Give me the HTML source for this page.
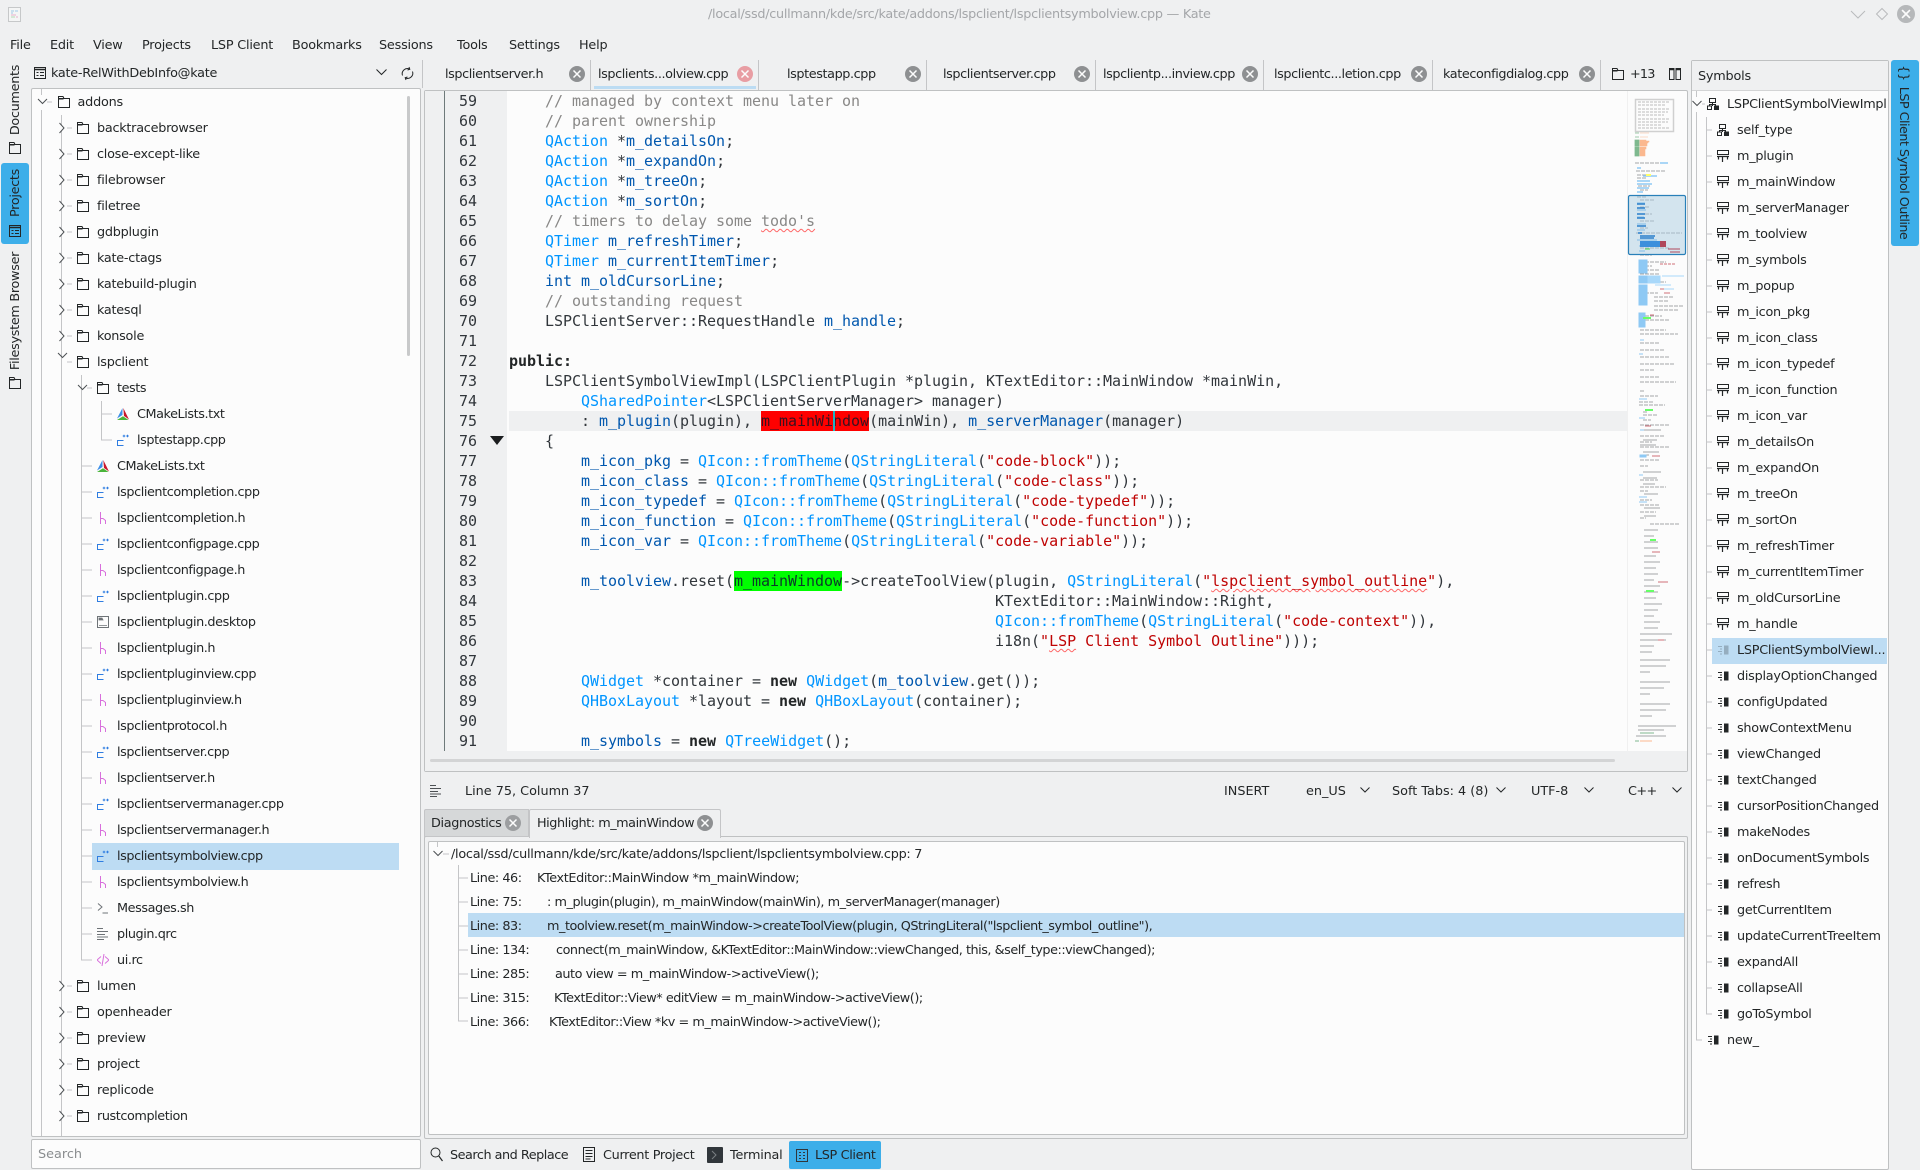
<!DOCTYPE html>
<html><head><meta charset="utf-8"><title>Kate</title>
<style>
html,body{margin:0;padding:0;width:1920px;height:1170px;overflow:hidden;background:#eff0f1;color:#232627;font:12.8px/26px "DejaVu Sans",sans-serif}
.a{position:absolute;white-space:nowrap}
.box{position:absolute;box-sizing:border-box;background:#fcfcfc;border:1px solid #bfc1c2;border-radius:2px}
svg{position:absolute;overflow:visible}
.rot{position:absolute;white-space:nowrap;letter-spacing:-.3px;transform:translate(-50%,-50%) rotate(-90deg)}
.tree{position:absolute;left:0;overflow:hidden}
.r{position:relative;height:26px;line-height:28px;white-space:nowrap}
.r svg{top:7px;width:12px;height:12px}
.t0{padding-left:77.5px;letter-spacing:-.2px}.t0 svg{left:57.5px}
.t1{padding-left:97px;letter-spacing:-.25px}.t1 svg{left:77px}
.t2{padding-left:117px;letter-spacing:-.42px}.t2 svg{left:97px}
.t3{padding-left:137px;letter-spacing:-.42px}.t3 svg{left:117px}
.s0{padding-left:1727px;letter-spacing:-.28px}.s0 svg{left:1707px}
.s1{padding-left:1737px;letter-spacing:-.25px}.s1 svg{left:1717px}
.code{position:absolute;font:15px/20px "DejaVu Sans Mono",monospace;letter-spacing:-.03px;white-space:pre;color:#31363b}
.code i{font-style:normal;color:#898887}
.code u{text-decoration:none;color:#0095ff}
.code em{font-style:normal;color:#0057ae}
.code s{text-decoration:none;color:#bf0303}
.code b{font-weight:bold;color:#232627}
.w{text-decoration:underline wavy #f66 .8px;text-underline-offset:2px}
.sq{position:absolute;width:16px;height:16px}
.res{position:absolute;line-height:24px;white-space:nowrap;margin-top:1px;letter-spacing:-.45px}
.mn{letter-spacing:-.2px}
.tb{letter-spacing:-.4px;top:62px}
</style></head><body>
<svg width="0" height="0" style="position:absolute">
<symbol id="f" viewBox="0 0 12 12"><path d="M.5 11.5V.5h4.500l1 2h5.500v9zM.5 3h5" fill="none" stroke="#232627"/><path d="M.5 2.500h11" stroke="#232627"/></symbol>
<symbol id="cp" viewBox="0 0 12 12"><path d="M6.500 6.500H.5v5h6" fill="none" stroke="#2f7de1"/><path d="M5.700 2h2.600M7 .7v2.600M9.200 2h2.600M10.500 .7v2.600" fill="none" stroke="#2f7de1"/></symbol>
<symbol id="h" viewBox="0 0 12 12"><path d="M3.500 0v12M3.500 6.500h2.500l2.500 2v3.500" fill="none" stroke="#d86fdc"/></symbol>
<symbol id="cm" viewBox="0 0 12 12"><path d="M5.500 0L0 10.500 5.500 7z" fill="#3d8fe8"/><path d="M6.300 0L12 11.500 7 8z" fill="#c8172c"/><path d="M0 12L6 8.300 11.500 12z" fill="#4ab43a"/></symbol>
<symbol id="dk" viewBox="0 0 12 12"><path d="M.5.500h11v11H.5z" fill="none" stroke="#6e7377"/><path d="M2 2h3l1 2H2zM2 9.500h8" fill="#6e7377" stroke="#6e7377" stroke-width=".8"/></symbol>
<symbol id="sh" viewBox="0 0 12 12"><path d="M1 1.500L5 5 1 8.500M5.500 11h5.500" fill="none" stroke="#6e7377"/></symbol>
<symbol id="qr" viewBox="0 0 12 12"><path d="M0 .5h6M0 3.500h11M0 6.500h8M0 9h11M0 11.500h7" fill="none" stroke="#6e7377"/></symbol>
<symbol id="ui" viewBox="0 0 12 12"><path d="M4 2.500L0 6l4 3.500M8 2.500L12 6l-4 3.500M7 0L5 12" fill="none" stroke="#d86fdc"/></symbol>
<symbol id="cl" viewBox="0 0 12 12"><path d="M2.500.5h6v4h-6zM.5 8h4v3.500h-4zM5.500 4.500V8M2.500 8V6.500h6V8" fill="none" stroke="#232627"/><path d="M7 7.500h5v4.500H7z" fill="#232627"/></symbol>
<symbol id="v" viewBox="0 0 12 12"><path d="M.5.500h11v4H.5z" fill="none" stroke="#232627"/><path d="M0 6.500h12M1.500 7v2.500M5.500 7v5M10.500 7v2.500" fill="none" stroke="#232627" stroke-width="1.200"/></symbol>
<symbol id="fn" viewBox="0 0 12 12"><path d="M1 2.500h4M3 5h2M1 7.500h4M3 10h2" fill="none" stroke="#232627"/><path d="M7 1.500h4.500v9H7z" fill="#232627"/></symbol>
<symbol id="pj" viewBox="0 0 12 12"><path d="M.5.500h11v11H.5z" fill="none" stroke="#232627"/><path d="M.5 2.500h11" stroke="#232627" stroke-width="1.500"/><path d="M2.500 5.500h2M6 5.500h4M2.500 8.500h2M6 8.500h4" fill="none" stroke="#232627"/></symbol>
<symbol id="x" viewBox="0 0 16 16"><circle cx="8" cy="8" r="8" fill="currentColor"/><path d="M4.500 4.500l7 7M11.500 4.500l-7 7" stroke="#fcfcfc" stroke-width="1.500"/></symbol>
</svg>

<!-- title bar -->
<svg style="left:8px;top:7px" width="13" height="15" viewBox="0 0 13 15"><path d="M.5.500h12v14H.5z" fill="#f4f5f5" stroke="#c6c8c9"/><path d="M3 4h3M7 4h3M3 6h2" stroke="#9fc9e6"/><path d="M3 8h5M8 10h2" stroke="#e7aecb"/><path d="M3 10h4" stroke="#b3d9b3"/></svg>
<div class="a" style="left:708px;top:2px;color:#a4a6a9;letter-spacing:-.27px">/local/ssd/cullmann/kde/src/kate/addons/lspclient/lspclientsymbolview.cpp — Kate</div>
<svg style="left:1850px;top:9px" width="16" height="10"><path d="M1 2l7 7 7-7" fill="none" stroke="#b9bbbd"/></svg>
<svg style="left:1876px;top:8px" width="12" height="12"><path d="M6 .5L11.500 6 6 11.500.5 6z" fill="none" stroke="#b9bbbd"/></svg>
<svg class="sq" style="left:1897px;top:5px;width:18px;height:18px;color:#b6b8ba"><use href="#x"/></svg>

<!-- menu -->
<div class="a mn" style="left:10px;top:33px">File</div>
<div class="a mn" style="left:50px;top:33px">Edit</div>
<div class="a mn" style="left:93px;top:33px">View</div>
<div class="a mn" style="left:142px;top:33px">Projects</div>
<div class="a mn" style="left:211px;top:33px">LSP Client</div>
<div class="a mn" style="left:292px;top:33px">Bookmarks</div>
<div class="a mn" style="left:379px;top:33px">Sessions</div>
<div class="a mn" style="left:457px;top:33px">Tools</div>
<div class="a mn" style="left:509px;top:33px">Settings</div>
<div class="a mn" style="left:579px;top:33px">Help</div>

<!-- left sidebar -->
<div class="a" style="left:1px;top:163px;width:28px;height:81px;background:#3daee9;border-radius:3px"></div>
<div class="rot" style="left:16px;top:100px">Documents</div>
<div class="rot" style="left:16px;top:193px">Projects</div>
<div class="rot" style="left:16px;top:311px">Filesystem Browser</div>
<svg style="left:9px;top:142px;width:12px;height:12px"><use href="#f"/></svg>
<svg style="left:9px;top:225px;width:12px;height:12px"><use href="#pj"/></svg>
<svg style="left:9px;top:377px;width:12px;height:12px"><use href="#f"/></svg>

<!-- project header -->
<svg style="left:34px;top:67px;width:12px;height:12px"><use href="#pj"/></svg>
<div class="a" style="left:51px;top:61px;letter-spacing:-.25px">kate-RelWithDebInfo@kate</div>
<svg style="left:376px;top:69px" width="11" height="7"><path d="M.5.500l5 5 5-5" fill="none" stroke="#232627"/></svg>
<svg style="left:401px;top:67px" width="13" height="13"><path d="M1.500 8.500a5.200 5.200 0 0 1 7-6.500M11.500 4.500a5.200 5.200 0 0 1-7 6.500M8 0l.8 2.300-2.300.7M5 13l-.8-2.300 2.300-.7" fill="none" stroke="#232627"/></svg>

<!-- left tree -->
<div class="box" style="left:31px;top:88px;width:390px;height:1049px"></div>
<div class="a" style="left:92px;top:843px;width:307px;height:27px;background:#bddcf3"></div>
<svg style="left:0;top:0" width="430" height="1140"><path d="M41.500 89v6M41.500 110V1136M47 102h5M61.500 115V1136M67 128h5M67 154h5M67 180h5M67 206h5M67 232h5M67 258h5M67 284h5M67 310h5M67 336h5M67 362h5M67 986h5M67 1012h5M67 1038h5M67 1064h5M67 1090h5M67 1116h5M81.500 375V960H92M87 388h5M82 466h10M82 492h10M82 518h10M82 544h10M82 570h10M82 596h10M82 622h10M82 648h10M82 674h10M82 700h10M82 726h10M82 752h10M82 778h10M82 804h10M82 830h10M82 856h10M82 882h10M82 908h10M82 934h10M101.500 401V440H112M102 414h10" fill="none" stroke="#c4c5c7"/>
<path d="M38 99l4.500 4.500L47 99M58 353l4.500 4.500L67 353M78 385l4.500 4.500L87 385" fill="none" stroke="#4d5154"/>
<path d="M59.500 123l4.500 5-4.500 5M59.500 149l4.500 5-4.500 5M59.500 175l4.500 5-4.500 5M59.500 201l4.500 5-4.500 5M59.500 227l4.500 5-4.500 5M59.500 253l4.500 5-4.500 5M59.500 279l4.500 5-4.500 5M59.500 305l4.500 5-4.500 5M59.500 331l4.500 5-4.500 5M59.500 981l4.500 5-4.500 5M59.500 1007l4.500 5-4.500 5M59.500 1033l4.500 5-4.500 5M59.500 1059l4.500 5-4.500 5M59.500 1085l4.500 5-4.500 5M59.500 1111l4.500 5-4.500 5" fill="#fcfcfc" stroke="#4d5154"/></svg>
<div class="tree" style="top:89px;width:420px;height:1047px">
<div class="r t0"><svg><use href="#f"/></svg>addons</div>
<div class="r t1"><svg><use href="#f"/></svg>backtracebrowser</div>
<div class="r t1"><svg><use href="#f"/></svg>close-except-like</div>
<div class="r t1"><svg><use href="#f"/></svg>filebrowser</div>
<div class="r t1"><svg><use href="#f"/></svg>filetree</div>
<div class="r t1"><svg><use href="#f"/></svg>gdbplugin</div>
<div class="r t1"><svg><use href="#f"/></svg>kate-ctags</div>
<div class="r t1"><svg><use href="#f"/></svg>katebuild-plugin</div>
<div class="r t1"><svg><use href="#f"/></svg>katesql</div>
<div class="r t1"><svg><use href="#f"/></svg>konsole</div>
<div class="r t1"><svg><use href="#f"/></svg>lspclient</div>
<div class="r t2"><svg><use href="#f"/></svg>tests</div>
<div class="r t3"><svg><use href="#cm"/></svg>CMakeLists.txt</div>
<div class="r t3"><svg><use href="#cp"/></svg>lsptestapp.cpp</div>
<div class="r t2"><svg><use href="#cm"/></svg>CMakeLists.txt</div>
<div class="r t2"><svg><use href="#cp"/></svg>lspclientcompletion.cpp</div>
<div class="r t2"><svg><use href="#h"/></svg>lspclientcompletion.h</div>
<div class="r t2"><svg><use href="#cp"/></svg>lspclientconfigpage.cpp</div>
<div class="r t2"><svg><use href="#h"/></svg>lspclientconfigpage.h</div>
<div class="r t2"><svg><use href="#cp"/></svg>lspclientplugin.cpp</div>
<div class="r t2"><svg><use href="#dk"/></svg>lspclientplugin.desktop</div>
<div class="r t2"><svg><use href="#h"/></svg>lspclientplugin.h</div>
<div class="r t2"><svg><use href="#cp"/></svg>lspclientpluginview.cpp</div>
<div class="r t2"><svg><use href="#h"/></svg>lspclientpluginview.h</div>
<div class="r t2"><svg><use href="#h"/></svg>lspclientprotocol.h</div>
<div class="r t2"><svg><use href="#cp"/></svg>lspclientserver.cpp</div>
<div class="r t2"><svg><use href="#h"/></svg>lspclientserver.h</div>
<div class="r t2"><svg><use href="#cp"/></svg>lspclientservermanager.cpp</div>
<div class="r t2"><svg><use href="#h"/></svg>lspclientservermanager.h</div>
<div class="r t2"><svg><use href="#cp"/></svg>lspclientsymbolview.cpp</div>
<div class="r t2"><svg><use href="#h"/></svg>lspclientsymbolview.h</div>
<div class="r t2"><svg><use href="#sh"/></svg>Messages.sh</div>
<div class="r t2"><svg><use href="#qr"/></svg>plugin.qrc</div>
<div class="r t2"><svg><use href="#ui"/></svg>ui.rc</div>
<div class="r t1"><svg><use href="#f"/></svg>lumen</div>
<div class="r t1"><svg><use href="#f"/></svg>openheader</div>
<div class="r t1"><svg><use href="#f"/></svg>preview</div>
<div class="r t1"><svg><use href="#f"/></svg>project</div>
<div class="r t1"><svg><use href="#f"/></svg>replicode</div>
<div class="r t1" style="letter-spacing:-.42px"><svg><use href="#f"/></svg>rustcompletion</div>
</div>
<div class="a" style="left:407px;top:96px;width:3px;height:260px;background:#c8c9ca;border-radius:2px"></div>

<!-- search -->
<div class="box" style="left:31px;top:1139px;width:390px;height:30px;line-height:30px;padding-left:6px;color:#8a8d8f">Search</div>

<!-- tabs -->
<div class="a" style="left:422px;top:60px;width:1px;height:28px;background:#c4c5c7"></div>
<div class="a" style="left:590px;top:60px;width:1px;height:30px;background:#c4c5c7"></div>
<div class="a" style="left:758px;top:60px;width:1px;height:30px;background:#c4c5c7"></div>
<div class="a" style="left:926px;top:60px;width:1px;height:30px;background:#c4c5c7"></div>
<div class="a" style="left:1095px;top:60px;width:1px;height:30px;background:#c4c5c7"></div>
<div class="a" style="left:1263px;top:60px;width:1px;height:30px;background:#c4c5c7"></div>
<div class="a" style="left:1432px;top:60px;width:1px;height:30px;background:#c4c5c7"></div>
<div class="a" style="left:1600px;top:60px;width:1px;height:30px;background:#c4c5c7"></div>
<div class="a" style="left:594px;top:86px;width:162px;height:3px;background:#bcdcf3"></div>
<div class="a tb" style="left:445px">lspclientserver.h</div>
<div class="a tb" style="left:598px">lspclients...olview.cpp</div>
<div class="a tb" style="left:787px">lsptestapp.cpp</div>
<div class="a tb" style="left:943px">lspclientserver.cpp</div>
<div class="a tb" style="left:1103px">lspclientp...inview.cpp</div>
<div class="a tb" style="left:1274px">lspclientc...letion.cpp</div>
<div class="a tb" style="left:1443px">kateconfigdialog.cpp</div>
<svg class="sq" style="left:569px;top:66px;color:#8e9092"><use href="#x"/></svg>
<svg class="sq" style="left:737px;top:66px;color:#e89da3"><use href="#x"/></svg>
<svg class="sq" style="left:905px;top:66px;color:#8e9092"><use href="#x"/></svg>
<svg class="sq" style="left:1074px;top:66px;color:#8e9092"><use href="#x"/></svg>
<svg class="sq" style="left:1242px;top:66px;color:#8e9092"><use href="#x"/></svg>
<svg class="sq" style="left:1411px;top:66px;color:#8e9092"><use href="#x"/></svg>
<svg class="sq" style="left:1579px;top:66px;color:#8e9092"><use href="#x"/></svg>
<svg style="left:1612px;top:68px;width:12px;height:12px"><use href="#f"/></svg>
<div class="a" style="left:1630px;top:62px;letter-spacing:-.8px">+13</div>
<svg style="left:1669px;top:68px" width="12" height="12"><path d="M.5.500h4.500v11H.5zM7 .5h4.500v11H7z" fill="none" stroke="#232627"/><path d="M.5 1.500h4.500M7 1.500h4.500" stroke="#232627" stroke-width="1.500"/></svg>

<!-- editor -->
<div class="box" style="left:424px;top:90px;width:1264px;height:682px"></div>
<div class="a" style="left:425px;top:91px;width:82px;height:660px;background:#eff0f1"></div>
<div class="a" style="left:444px;top:91px;width:1px;height:660px;background:#6e7a7a"></div>
<div class="a" style="left:425px;top:751px;width:1262px;height:20px;background:#eff0f1"></div>
<div class="a" style="left:430px;top:759px;width:1185px;height:3px;background:#d3d4d5;border-radius:2px"></div>
<div class="a" style="left:509px;top:411px;width:1118px;height:20px;background:#eff0f1"></div>
<div class="a" style="left:761px;top:411px;width:108px;height:20px;background:#f00"></div>
<div class="a" style="left:734px;top:571px;width:108px;height:20px;background:#0f0"></div>
<div class="a" style="left:833px;top:411px;width:2px;height:20px;background:#1fb5c4;z-index:3"></div>
<div class="code" style="left:459px;top:91px;height:660px;overflow:hidden;color:#31363b">59
60
61
62
63
64
65
66
67
68
69
70
71
72
73
74
75
76
77
78
79
80
81
82
83
84
85
86
87
88
89
90
91</div>
<svg style="left:490px;top:436px" width="14" height="9"><path d="M0 0h14L7 9z" fill="#1b1d1f"/></svg>
<div class="code" style="left:509px;top:91px;width:1118px;height:660px;overflow:hidden">    <i>// managed by context menu later on</i>
    <i>// parent ownership</i>
    <u>QAction</u> *<em>m_detailsOn</em>;
    <u>QAction</u> *<em>m_expandOn</em>;
    <u>QAction</u> *<em>m_treeOn</em>;
    <u>QAction</u> *<em>m_sortOn</em>;
    <i>// timers to delay some <span class="w">todo's</span></i>
    <u>QTimer</u> <em>m_refreshTimer</em>;
    <u>QTimer</u> <em>m_currentItemTimer</em>;
    <em>int m_oldCursorLine</em>;
    <i>// outstanding request</i>
    LSPClientServer::RequestHandle <em>m_handle</em>;

<b>public:</b>
    LSPClientSymbolViewImpl(LSPClientPlugin *plugin, KTextEditor::MainWindow *mainWin,
        <u>QSharedPointer</u>&lt;LSPClientServerManager&gt; manager)
        : <em>m_plugin</em>(plugin), <span style="color:#3a1220">m_mainWindow</span>(mainWin), <em>m_serverManager</em>(manager)
    {
        <em>m_icon_pkg</em> = <u>QIcon::fromTheme</u>(<u>QStringLiteral</u>(<s>"code-block"</s>));
        <em>m_icon_class</em> = <u>QIcon::fromTheme</u>(<u>QStringLiteral</u>(<s>"code-class"</s>));
        <em>m_icon_typedef</em> = <u>QIcon::fromTheme</u>(<u>QStringLiteral</u>(<s>"code-typedef"</s>));
        <em>m_icon_function</em> = <u>QIcon::fromTheme</u>(<u>QStringLiteral</u>(<s>"code-function"</s>));
        <em>m_icon_var</em> = <u>QIcon::fromTheme</u>(<u>QStringLiteral</u>(<s>"code-variable"</s>));

        <em>m_toolview</em>.reset(<span style="color:#0b3a2a">m_mainWindow</span>-&gt;createToolView(plugin, <u>QStringLiteral</u>(<s>"<span class="w">lspclient_symbol_outline</span>"</s>),
                                                      KTextEditor::MainWindow::Right,
                                                      <u>QIcon::fromTheme</u>(<u>QStringLiteral</u>(<s>"code-context"</s>)),
                                                      i18n(<s>"<span class="w">LSP</span> Client Symbol Outline"</s>)));

        <u>QWidget</u> *container = <b>new</b> <u>QWidget</u>(<em>m_toolview</em>.get());
        <u>QHBoxLayout</u> *layout = <b>new</b> <u>QHBoxLayout</u>(container);

        <em>m_symbols</em> = <b>new</b> <u>QTreeWidget</u>();</div>

<!-- minimap -->
<svg style="left:1627px;top:91px" width="60" height="660" viewBox="1627 91 60 660">
<path d="M1627.500 91V751" stroke="#f0f0f0"/>
<path d="M1635.500 99.500h38v32h-38z" fill="none" stroke="#d0d0d0" stroke-width="1.500"/>
<path d="M1638 102h32M1638 105h28M1638 109h32M1638 112h30M1638 115h26M1638 119h31M1638 122h30M1638 125h24M1638 128h32" stroke="#bdbdbd" fill="none" stroke-dasharray="3 1"/>
<path d="M1635 133h4M1635 137h4M1635 140h4v6h-4zM1635 147h4v9h-4z" stroke="#7fb98f" fill="#7fb98f" stroke-width=".8"/>
<path d="M1640 133h9M1640 137h8M1640 140h6v1h3v1h-1v1h-1v3h-7zM1640 147h6v2h-1v7h-5z" stroke="#fbb88f" fill="#fbb88f" stroke-width=".6"/>
<g fill="none" stroke-width="1">
<path d="M1635 163h30M1636 171h30M1637 175h12M1637 178h10M1638 186h12M1640 190h8M1637 197h10M1640 200h14M1640 207h10M1640 214h12M1640 221h14M1640 228h8M1636 233h46M1640 248h30M1640 255h12M1640 262h26M1640 266h12M1640 270h20M1640 274h20M1640 278h14M1640 282h26M1640 293h18M1654 297h20M1654 301h14M1654 306h30M1654 310h24M1640 316h22M1640 320h30M1640 330h26M1640 334h38M1640 343h20M1640 350h24M1640 357h30M1640 364h34M1640 370h14M1640 377h20M1640 382h36M1640 391h4M1640 396h18M1639 402h14M1639 405h26M1643 412h4M1643 415h14M1643 420h8M1640 425h30M1640 430h20M1640 436h24M1640 442h12M1640 447h30M1640 455h10M1640 460h20M1640 466h8M1640 480h18M1640 487h26M1640 491h8M1640 500h12M1640 505h20M1640 512h16M1640 518h6M1650 524h30M1642 430h20" stroke="#a4a6a8" stroke-dasharray="4 1"/>
<path d="M1640 445h16M1643 440h14M1643 452h16M1643 472h18M1643 478h14M1643 484h12M1644 494h14M1644 508h16M1644 516h12M1644 530h14M1644 536h10M1644 542h14M1644 548h14M1644 556h12M1644 562h16M1644 568h12M1644 574h14M1644 580h10M1644 586h16M1644 592h14M1644 598h12M1644 604h18M1644 610h14M1644 616h10M1644 622h16M1644 628h14M1640 634h32M1640 640h26M1640 646h14M1640 652h12M1640 660h30M1640 666h26M1640 672h10M1640 682h30M1640 688h24M1640 694h10M1640 704h30M1640 710h26M1640 716h12M1638 726h38M1638 730h26M1636 736h30" stroke="#a4a6a8"/>
<path d="M1637 168h4M1637 181h13M1637 184h15M1637 188h12M1637 192h6M1643 176h14M1660 163h8M1637 203h8M1637 210h9M1637 217h7M1637 224h9M1637 230h8M1637 240h20M1639 246h4M1639 251h6" stroke="#8ec9f4" stroke-width="1.500"/>
<path d="M1639 260h8v13h-8zM1639 276h8v7h-8zM1639 285h8v20h-8zM1639 313h6v14h-6zM1640 455h6v2h-6zM1640 340h4M1640 430h4M1639 354h4M1639 399h8M1639 418h6M1639 475h4M1639 497h8M1639 502h8" stroke="#8ec9f4" fill="#8ec9f4"/>
<path d="M1648 276h12v7h-12zM1662 276h22M1655 285h16M1660 289h14" stroke="#a8d8fa" fill="#a8d8fa"/>
<path d="M1660 264h3M1664 264h3M1668 264h3M1672 264h3M1660 289h4M1664 293h6M1650 315h4M1645 426h6M1658 582h10M1652 456h8M1658 640h6M1652 552h8" stroke="#cf6f77"/>
<path d="M1646 175h5" stroke="#ffff66" stroke-width="2"/><path d="M1643 318h8M1645 410h8M1646 591h8M1650 540h6" stroke="#66ff66" stroke-width="2"/>
<path d="M1640 733h4M1644 733h10M1635 741h4" stroke="#7fb98f"/><path d="M1640 741h12" stroke="#fbb88f"/>
</g>
<rect x="1628.500" y="195.500" width="57" height="59" rx="1.500" fill="#a9cbe0" fill-opacity=".5" stroke="#2980b9" stroke-width="1.200"/>
<path d="M1637 204h8M1637 208h8M1637 214h8M1637 218h8M1637 226h9M1638 233h4M1640 236h15M1640 238h14" stroke="#2a7fcb" stroke-width="1.500" fill="none"/>
<path d="M1640 241h12v6h-12zM1652 241h8v6h-8z" fill="#3c8fdc"/><path d="M1660 241h6v6h-6z" fill="#b0485c"/><path d="M1645 249h5" stroke="#4dd84d"/><path d="M1668 249h12M1670 252h10" stroke="#b0485c"/>
</svg>

<!-- status bar -->
<svg style="left:430px;top:785px" width="13" height="12"><path d="M0 .5h6M0 3.500h11M0 6.500h8M0 9h11M0 11.500h7" fill="none" stroke="#4d5154"/></svg>
<div class="a" style="left:465px;top:779px">Line 75, Column 37</div>
<div class="a" style="left:1224px;top:779px">INSERT</div>
<div class="a" style="left:1306px;top:779px">en_US</div>
<div class="a" style="left:1392px;top:779px">Soft Tabs: 4 (8)</div>
<div class="a" style="left:1531px;top:779px">UTF-8</div>
<div class="a" style="left:1628px;top:779px;letter-spacing:-.6px">C++</div>
<svg style="left:1360px;top:787px" width="10" height="6"><path d="M.5.500l4.500 4.500 4.500-4.500" fill="none" stroke="#232627"/></svg>
<svg style="left:1496px;top:787px" width="10" height="6"><path d="M.5.500l4.500 4.500 4.500-4.500" fill="none" stroke="#232627"/></svg>
<svg style="left:1584px;top:787px" width="10" height="6"><path d="M.5.500l4.500 4.500 4.500-4.500" fill="none" stroke="#232627"/></svg>
<svg style="left:1672px;top:787px" width="10" height="6"><path d="M.5.500l4.500 4.500 4.500-4.500" fill="none" stroke="#232627"/></svg>

<!-- results -->
<div class="box" style="left:424px;top:836px;width:1264px;height:303px;background:#eff0f1"></div>
<div class="a" style="left:424px;top:809px;width:105px;height:28px;background:#d6d8d9;border:1px solid #c4c5c7;box-sizing:border-box;border-radius:2px 0 0 0"></div>
<div class="a" style="left:529px;top:809px;width:192px;height:29px;background:#eff0f1;border:1px solid #c4c5c7;border-bottom:none;box-sizing:border-box;border-radius:2px 2px 0 0"></div>
<div class="a" style="left:431px;top:811px;letter-spacing:-.35px">Diagnostics</div>
<svg class="sq" style="left:505px;top:815px;color:#9c9ea0"><use href="#x"/></svg>
<div class="a" style="left:537px;top:811px;letter-spacing:-.45px">Highlight: m_mainWindow</div>
<svg class="sq" style="left:697px;top:815px;color:#8e9092"><use href="#x"/></svg>
<div class="box" style="left:428px;top:841px;width:1257px;height:294px"></div>
<div class="a" style="left:468px;top:913px;width:1216px;height:24px;background:#bddcf3"></div>
<svg style="left:0;top:0" width="500" height="1040"><path d="M437.500 842v5M443 854h6M458.500 865V1021H468M459 878h9M459 902h9M459 926h9M459 950h9M459 974h9M459 998h9" fill="none" stroke="#c4c5c7"/><path d="M433.500 851l4.500 4.500 4.500-4.500" fill="none" stroke="#4d5154"/></svg>
<div class="res" style="left:451px;top:842px;letter-spacing:-.26px">/local/ssd/cullmann/kde/src/kate/addons/lspclient/lspclientsymbolview.cpp: 7</div>
<div class="res" style="left:470px;top:866px">Line: 46:</div><div class="res" style="left:537px;top:866px;letter-spacing:-.38px">KTextEditor::MainWindow *m_mainWindow;</div>
<div class="res" style="left:470px;top:890px">Line: 75:</div><div class="res" style="left:547px;top:890px">: m_plugin(plugin), m_mainWindow(mainWin), m_serverManager(manager)</div>
<div class="res" style="left:470px;top:914px">Line: 83:</div><div class="res" style="left:547px;top:914px">m_toolview.reset(m_mainWindow-&gt;createToolView(plugin, QStringLiteral("lspclient_symbol_outline"),</div>
<div class="res" style="left:470px;top:938px">Line: 134:</div><div class="res" style="left:556px;top:938px;letter-spacing:-.47px">connect(m_mainWindow, &amp;KTextEditor::MainWindow::viewChanged, this, &amp;self_type::viewChanged);</div>
<div class="res" style="left:470px;top:962px">Line: 285:</div><div class="res" style="left:555px;top:962px">auto view = m_mainWindow-&gt;activeView();</div>
<div class="res" style="left:470px;top:986px">Line: 315:</div><div class="res" style="left:554px;top:986px">KTextEditor::View* editView = m_mainWindow-&gt;activeView();</div>
<div class="res" style="left:470px;top:1010px">Line: 366:</div><div class="res" style="left:549px;top:1010px">KTextEditor::View *kv = m_mainWindow-&gt;activeView();</div>

<!-- bottom bar -->
<svg style="left:430px;top:1147px" width="14" height="15"><circle cx="5.500" cy="5.500" r="4.500" fill="none" stroke="#232627"/><path d="M8.800 9l3.700 5" stroke="#232627" stroke-width="1.200"/></svg>
<div class="a" style="left:450px;top:1143px;letter-spacing:-.48px">Search and Replace</div>
<svg style="left:583px;top:1147px" width="12" height="15"><path d="M.5.500h11v14H.5z" fill="none" stroke="#232627"/><path d="M2.500 3.500h7M2.500 6.500h7M2.500 9.500h7M2.500 12h5" stroke="#232627"/></svg>
<div class="a" style="left:603px;top:1143px;letter-spacing:-.3px">Current Project</div>
<svg style="left:707px;top:1147px" width="16" height="16"><rect width="16" height="16" rx="1" fill="#31363b"/><path d="M5 4l4 4-4 4" fill="none" stroke="#7b8084"/></svg>
<div class="a" style="left:730px;top:1143px;letter-spacing:-.2px">Terminal</div>
<div class="a" style="left:789px;top:1141px;width:92px;height:28px;background:#3daee9;border-radius:2px"></div>
<svg style="left:796px;top:1149px" width="12" height="13"><path d="M.5.500h11v12H.5z" fill="none" stroke="#31363b"/><path d="M3 3.500h2M7 3.500h2M3 6.500h2M7 6.500h2M3 9.500h2M7 9.500h2" stroke="#31363b"/></svg>
<div class="a" style="left:815px;top:1143px;letter-spacing:-.35px">LSP Client</div>

<!-- symbols -->
<div class="box" style="left:1691px;top:60px;width:198px;height:1110px"></div>
<div class="a" style="left:1692px;top:90px;width:196px;height:1px;background:#d3d4d5"></div>
<div class="a" style="left:1692px;top:61px;width:196px;height:29px;background:#eff0f1"></div>
<div class="a" style="left:1698px;top:64px;letter-spacing:-.2px">Symbols</div>
<div class="a" style="left:1712px;top:638px;width:175px;height:26px;background:#bddcf3"></div>
<svg style="left:0;top:0" width="1890" height="1060"><path d="M1696.500 91v6M1696.500 112V1040H1702M1702 104h3M1706.500 117V1014H1712" fill="none" stroke="#c4c5c7"/><path d="M1707 130h5M1707 156h5M1707 182h5M1707 208h5M1707 234h5M1707 260h5M1707 286h5M1707 312h5M1707 338h5M1707 364h5M1707 390h5M1707 416h5M1707 442h5M1707 468h5M1707 494h5M1707 520h5M1707 546h5M1707 572h5M1707 598h5M1707 624h5M1707 650h5M1707 676h5M1707 702h5M1707 728h5M1707 754h5M1707 780h5M1707 806h5M1707 832h5M1707 858h5M1707 884h5M1707 910h5M1707 936h5M1707 962h5M1707 988h5" stroke="#c4c5c7"/><path d="M1692.500 101l4.500 4.500 4.500-4.500" fill="none" stroke="#4d5154"/></svg>
<div class="tree" style="top:91px;width:1887px;height:1078px">
<div class="r s0"><svg><use href="#cl"/></svg>LSPClientSymbolViewImpl</div>
<div class="r s1"><svg><use href="#cl"/></svg>self_type</div>
<div class="r s1"><svg><use href="#v"/></svg>m_plugin</div>
<div class="r s1"><svg><use href="#v"/></svg>m_mainWindow</div>
<div class="r s1"><svg><use href="#v"/></svg>m_serverManager</div>
<div class="r s1"><svg><use href="#v"/></svg>m_toolview</div>
<div class="r s1"><svg><use href="#v"/></svg>m_symbols</div>
<div class="r s1"><svg><use href="#v"/></svg>m_popup</div>
<div class="r s1"><svg><use href="#v"/></svg>m_icon_pkg</div>
<div class="r s1"><svg><use href="#v"/></svg>m_icon_class</div>
<div class="r s1"><svg><use href="#v"/></svg>m_icon_typedef</div>
<div class="r s1"><svg><use href="#v"/></svg>m_icon_function</div>
<div class="r s1"><svg><use href="#v"/></svg>m_icon_var</div>
<div class="r s1"><svg><use href="#v"/></svg>m_detailsOn</div>
<div class="r s1"><svg><use href="#v"/></svg>m_expandOn</div>
<div class="r s1"><svg><use href="#v"/></svg>m_treeOn</div>
<div class="r s1"><svg><use href="#v"/></svg>m_sortOn</div>
<div class="r s1"><svg><use href="#v"/></svg>m_refreshTimer</div>
<div class="r s1"><svg><use href="#v"/></svg>m_currentItemTimer</div>
<div class="r s1"><svg><use href="#v"/></svg>m_oldCursorLine</div>
<div class="r s1"><svg><use href="#v"/></svg>m_handle</div>
<div class="r s1"><svg style="opacity:.25"><use href="#fn"/></svg>LSPClientSymbolViewI...</div>
<div class="r s1"><svg><use href="#fn"/></svg>displayOptionChanged</div>
<div class="r s1"><svg><use href="#fn"/></svg>configUpdated</div>
<div class="r s1"><svg><use href="#fn"/></svg>showContextMenu</div>
<div class="r s1"><svg><use href="#fn"/></svg>viewChanged</div>
<div class="r s1"><svg><use href="#fn"/></svg>textChanged</div>
<div class="r s1"><svg><use href="#fn"/></svg>cursorPositionChanged</div>
<div class="r s1"><svg><use href="#fn"/></svg>makeNodes</div>
<div class="r s1"><svg><use href="#fn"/></svg>onDocumentSymbols</div>
<div class="r s1"><svg><use href="#fn"/></svg>refresh</div>
<div class="r s1"><svg><use href="#fn"/></svg>getCurrentItem</div>
<div class="r s1"><svg><use href="#fn"/></svg>updateCurrentTreeItem</div>
<div class="r s1"><svg><use href="#fn"/></svg>expandAll</div>
<div class="r s1"><svg><use href="#fn"/></svg>collapseAll</div>
<div class="r s1"><svg><use href="#fn"/></svg>goToSymbol</div>
<div class="r s0"><svg><use href="#fn"/></svg>new_</div>
</div>

<!-- right sidebar button -->
<div class="a" style="left:1891px;top:60px;width:28px;height:186px;background:#3daee9;border-radius:3px"></div>
<div class="rot" style="left:1903px;top:73px;transform:translate(-50%,-50%) rotate(90deg)">{}</div>
<div class="rot" style="left:1903px;top:163px;letter-spacing:-.55px;transform:translate(-50%,-50%) rotate(90deg)">LSP Client Symbol Outline</div>
</body></html>
